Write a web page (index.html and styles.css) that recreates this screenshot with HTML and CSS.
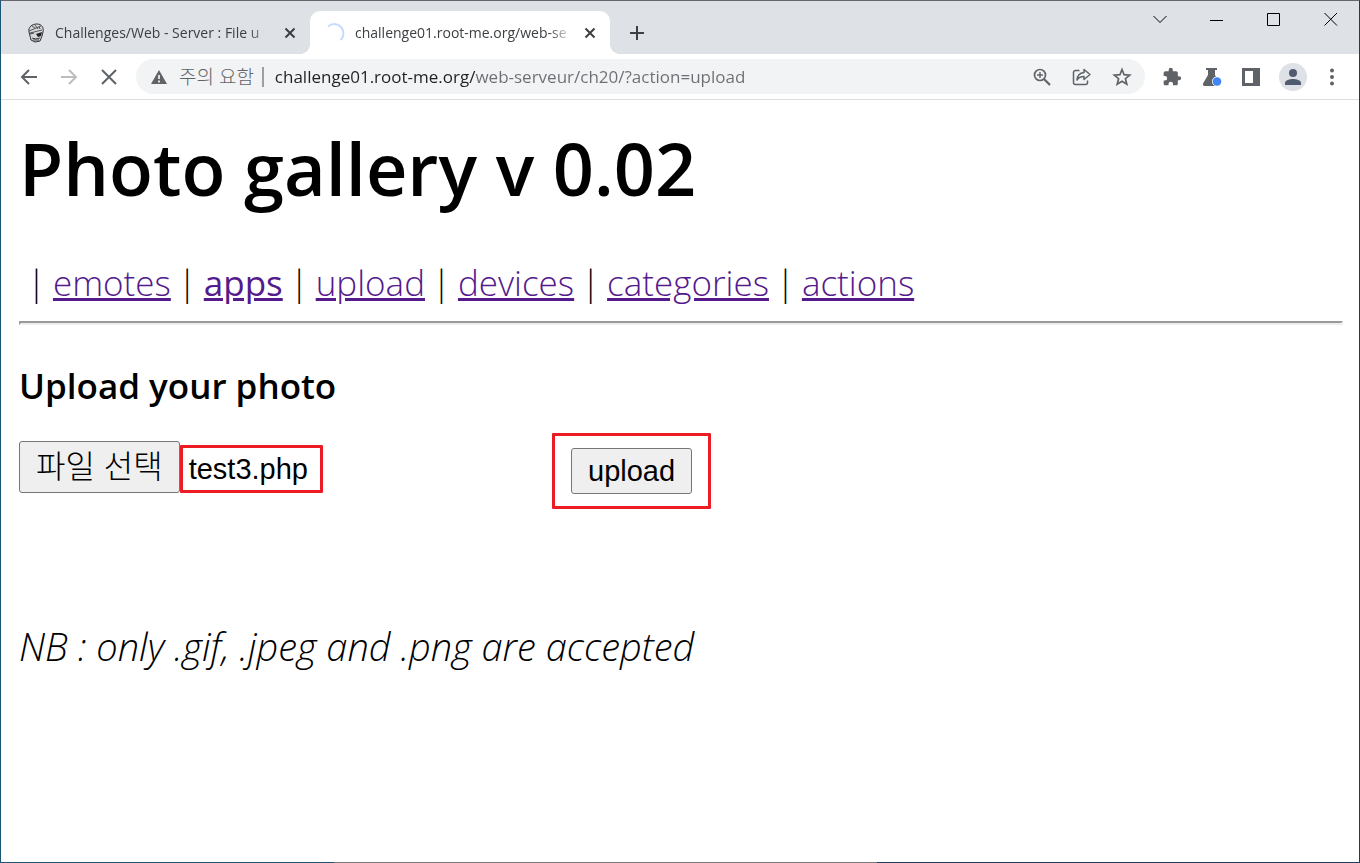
FILE: index.html
```
<!DOCTYPE html>
<html lang="ko">

<head>
    <meta charset="UTF-8">
    <meta name="viewport" content="width=device-width, initial-scale=1.0">
    <title>Photo gallery v 0.02</title>
    <link rel="stylesheet" href="styles.css">
</head>

<body>
    <div class="window">
        <header class="tab-strip">
            <div class="tab">
                <svg class="favicon" width="18" height="20" viewBox="0 0 18 20">
                    <path d="M2 9C1 4 5 1 10 1c5 0 7 4 6 8l-1 4-2 5-5 1-4-2z" fill="#d5d7da" stroke="#333" />
                    <path d="M2 8l12-5M3 10l12-3M5 3l3 2M8 2l3 4M12 3l1 3" stroke="#555" fill="none" />
                    <path d="M9 11l6-2-1 4-3 1z" fill="#222" />
                    <path d="M3 11l4-1M5 15l3 1 5-1M7 15v3M9 16v2M11 15v3" stroke="#444" fill="none" />
                </svg>
                <span class="tab-title">Challenges/Web - Server : File u</span>
                <button class="tab-close" aria-label="탭 닫기">
                    <svg width="12" height="12" viewBox="0 0 12 12"><path d="M1.5 1.5l9 9M10.5 1.5l-9 9" /></svg>
                </button>
            </div>
            <div class="tab active">
                <svg class="favicon" width="18" height="20" viewBox="0 0 18 20">
                    <path d="M1 3.5A8.5 8.5 0 0 1 13.5 17" fill="none" stroke="#c6dafc" stroke-width="2" />
                </svg>
                <span class="tab-title">challenge01.root-me.org/web-se</span>
                <button class="tab-close" aria-label="탭 닫기">
                    <svg width="12" height="12" viewBox="0 0 12 12"><path d="M1.5 1.5l9 9M10.5 1.5l-9 9" /></svg>
                </button>
            </div>
            <button class="new-tab" aria-label="새 탭">
                <svg width="16" height="16" viewBox="0 0 16 16"><path d="M8 1v14M1 8h14" /></svg>
            </button>
            <div class="window-controls">
                <button aria-label="탭 검색"><svg width="14" height="14" viewBox="0 0 14 14"><path d="M.5 4L7 10.500 13.500 4" /></svg></button>
                <button aria-label="최소화"><svg width="14" height="14" viewBox="0 0 14 14"><path d="M0 8.500h13" /></svg></button>
                <button aria-label="최대화"><svg width="14" height="14" viewBox="0 0 14 14"><path d="M.5 1.500h12v12H.5z" /></svg></button>
                <button aria-label="닫기"><svg width="14" height="14" viewBox="0 0 14 14"><path d="M.5 1l12.500 12.500M13 1L.5 13.500" /></svg></button>
            </div>
        </header>

        <div class="toolbar">
            <div class="history">
                <button aria-label="뒤로"><svg width="18" height="18" viewBox="0 0 18 18"><path d="M17 9H2M9 2L2 9l7 7" /></svg></button>
                <button aria-label="앞으로" disabled><svg width="18" height="18" viewBox="0 0 18 18"><path d="M1 9h15M9 2l7 7-7 7" /></svg></button>
                <button aria-label="중지"><svg width="18" height="18" viewBox="0 0 18 18"><path d="M2 2l14 14M16 2L2 16" /></svg></button>
            </div>
            <div class="address-bar">
                <svg width="16" height="14" viewBox="0 0 16 14">
                    <path d="M8 0l8 14H0z" fill="#5f6368" />
                    <path d="M8 5v4M8 10.500v2" stroke="#fff" stroke-width="1.600" />
                </svg>
                <span class="security">주의 요함</span>
                <input class="url" type="text" aria-label="주소창" value="challenge01.root-me.org/web-serveur/ch20/?action=upload">
                <button aria-label="확대">
                    <svg width="20" height="20" viewBox="0 0 20 20" fill="none" stroke="#5f6368">
                        <circle cx="8" cy="8" r="5.500" stroke-width="1.700" />
                        <path d="M12 12l6 6" stroke-width="2.200" />
                        <path d="M8 5v6M5 8h6" stroke-width="1.400" />
                    </svg>
                </button>
                <button aria-label="공유">
                    <svg width="20" height="20" viewBox="0 0 20 20" fill="none" stroke="#5f6368" stroke-width="1.500">
                        <path d="M7.500 3.500H3.500a2 2 0 0 0-2 2v10a2 2 0 0 0 2 2h10a2 2 0 0 0 2-2v-2" />
                        <path d="M12 2.500l6 5-6 5v-3c-3.500 0-5.500 1-7 3.500.3-4.500 2.500-7 7-7.500z" stroke-linejoin="round" />
                    </svg>
                </button>
                <button aria-label="북마크">
                    <svg width="20" height="20" viewBox="0 0 20 20" fill="none" stroke="#5f6368" stroke-width="1.700">
                        <path d="M10 2.500l2.100 5.200 5.600.4-4.300 3.600 1.400 5.500L10 14.200l-4.800 3 1.400-5.500-4.300-3.600 5.600-.4z" />
                    </svg>
                </button>
            </div>
            <div class="extensions">
                <button aria-label="확장 프로그램">
                    <svg width="22" height="20" viewBox="0 0 24 24">
                        <path d="M20.500 11H19V7c0-1.100-.9-2-2-2h-4V3.500a2.500 2.500 0 0 0-5 0V5H4c-1.100 0-2 .9-2 2v3.800h1.500a2.700 2.700 0 0 1 0 5.400H2V20c0 1.100.9 2 2 2h3.800v-1.500a2.700 2.700 0 0 1 5.400 0V22H17c1.100 0 2-.9 2-2v-4h1.500a2.500 2.500 0 0 0 0-5z" fill="#5f6368" />
                    </svg>
                </button>
                <button aria-label="실험실">
                    <svg width="22" height="20" viewBox="0 0 20 20">
                        <path d="M4 1h11v2h-2v5l5 8c.8 1.500 0 3-1.500 3h-14C1 19 .5 17.500 1.300 16L6 8V3H4z" fill="#5f6368" />
                        <circle cx="15" cy="14.500" r="5" fill="#fff" />
                        <circle cx="15" cy="14.500" r="4.300" fill="#4285f4" />
                    </svg>
                </button>
                <button aria-label="측면 패널">
                    <svg width="20" height="18" viewBox="0 0 18 18">
                        <path d="M0 0h18v18H0zM3 3v12h8V3z" fill="#5f6368" fill-rule="evenodd" />
                    </svg>
                </button>
                <button class="profile" aria-label="프로필">
                    <svg width="18" height="18" viewBox="0 0 18 18" fill="#525c70">
                        <circle cx="9" cy="5" r="4" />
                        <path d="M1 17v-2c0-3 5-4 8-4s8 1 8 4v2z" />
                    </svg>
                </button>
                <button aria-label="메뉴">
                    <svg width="14" height="18" viewBox="0 0 14 18" fill="#5f6368">
                        <circle cx="7" cy="2.500" r="2" /><circle cx="7" cy="9" r="2" /><circle cx="7" cy="15.500" r="2" />
                    </svg>
                </button>
            </div>
        </div>

        <main class="page">
            <h1>Photo gallery v 0.02</h1>
            <nav class="menu">
                <span>|</span>
                <a href="#emotes">emotes</a>
                <span>|</span>
                <a href="#apps"><b>apps</b></a>
                <span>|</span>
                <a href="#upload">upload</a>
                <span>|</span>
                <a href="#devices">devices</a>
                <span>|</span>
                <a href="#categories">categories</a>
                <span>|</span>
                <a href="#actions">actions</a>
            </nav>
            <hr>
            <h3>Upload your photo</h3>
            <form class="upload-form">
                <div class="file-picker">
                    <button type="button" class="file-button">파일 선택</button>
                    <span class="file-name">test3.php</span>
                </div>
                <div class="submit-box">
                    <button type="submit">upload</button>
                </div>
            </form>
            <p class="notice">NB : only .gif, .jpeg and .png are accepted</p>
        </main>
        <div class="window-bottom"></div>
    </div>
</body>

</html>
```
FILE: styles.css
```
* {
    box-sizing: border-box;
}

body {
    margin: 0;
    background-color: white;
    color: black;
    font-family: "Open Sans", "Noto Sans CJK KR", sans-serif;
}

button {
    margin: 0;
    padding: 0;
    border: none;
    background: none;
}

svg {
    display: block;
    flex-shrink: 0;
}

.window {
    display: flex;
    flex-direction: column;
    min-height: 100vh;
    border-top: 1px solid #66676b;
    border-left: 1px solid #1b5577;
    border-right: 1px solid #1f3b64;
}

/* tabs */
.tab-strip {
    display: flex;
    height: 53px;
    padding-left: 9px;
    background-color: #dee1e6;
}

.tab {
    position: relative;
    display: flex;
    align-items: center;
    width: 300px;
    height: 43px;
    margin-top: 10px;
    padding: 0 14px 0 17px;
    border-radius: 10px 10px 0 0;
}

.tab.active {
    background-color: white;
}

/* rounded feet of the open tab */
.tab.active::before,
.tab.active::after {
    content: "";
    position: absolute;
    bottom: 0;
    width: 10px;
    height: 10px;
}

.tab.active::before {
    left: -10px;
    background: radial-gradient(circle at 0 0, transparent 10px, white 10px);
}

.tab.active::after {
    right: -10px;
    background: radial-gradient(circle at 100% 0, transparent 10px, white 10px);
}

.tab-title {
    flex: 1;
    margin: 0 11px 0 10px;
    overflow: hidden;
    white-space: nowrap;
    font-size: 14px;
    line-height: 20px;
    color: #3c4043;
    -webkit-mask-image: linear-gradient(to left, transparent, black 24px);
    mask-image: linear-gradient(to left, transparent, black 24px);
}

.tab-close svg,
.new-tab svg {
    fill: none;
    stroke: #3c4043;
    stroke-width: 2;
}

.new-tab {
    width: 16px;
    margin: 10px 0 0 19px;
}

.window-controls {
    display: flex;
    align-items: flex-start;
    margin-left: auto;
}

.window-controls button {
    display: flex;
    justify-content: center;
    width: 57px;
    padding-top: 11px;
}

.window-controls svg {
    fill: none;
    stroke: black;
}

/* toolbar */
.toolbar {
    display: flex;
    align-items: center;
    height: 46px;
    padding: 0 20px 0 19px;
    border-bottom: 1px solid #dcdddf;
}

.history {
    display: flex;
    gap: 22px;
    margin-right: 18px;
}

.history svg {
    fill: none;
    stroke: #5f6368;
    stroke-width: 2;
}

.history button:disabled svg {
    stroke: #bbbdbf;
}

.address-bar {
    display: flex;
    flex: 1;
    align-items: center;
    height: 35px;
    padding: 0 13px 0 15px;
    border-radius: 18px;
    background-color: #f1f3f4;
}

.address-bar button {
    margin-left: 20px;
}

.security {
    margin: 0 11px 0 12px;
    padding-right: 8px;
    border-right: 2px solid #9aa0a6;
    font-size: 19px;
    font-weight: 300;
    line-height: 20px;
    color: #5f6368;
}

/* host is darker than the path */
.url {
    flex: 1;
    min-width: 0;
    padding: 0;
    border: none;
    outline: none;
    font-family: inherit;
    font-size: 17px;
    color: transparent;
    background: linear-gradient(to right, #202124 200px, #6b6f73 200px);
    -webkit-background-clip: text;
    background-clip: text;
}

.extensions {
    display: flex;
    align-items: center;
    gap: 18px;
    margin-left: 16px;
}

.profile {
    display: flex;
    align-items: center;
    justify-content: center;
    width: 28px;
    height: 28px;
    border-radius: 50%;
    background-color: #dee1e6;
}

/* page */
.page {
    flex: 1;
    padding: 20px 16px 18px 18px;
    font-size: 35px;
    line-height: 48px;
}

h1 {
    margin: 0 0 43px;
    font-size: 72px;
    font-weight: 600;
    line-height: 96px;
}

.menu {
    display: flex;
    gap: 7px;
    padding-left: 8px;
    font-weight: 300;
}

.menu a {
    color: #551a8b;
}

hr {
    height: 4px;
    margin: 14px 0 37px;
    border: 2px solid;
    border-color: #9a9a9a #eeeeee #eeeeee #9a9a9a;
}

h3 {
    margin: 0 0 23px;
    font-size: 35px;
    font-weight: 600;
}

.upload-form {
    display: flex;
    align-items: center;
    height: 76px;
}

.file-picker {
    display: flex;
    align-items: flex-end;
    width: 533px;
    padding-bottom: 8px;
}

.upload-form button {
    border: 1px solid #767676;
    border-radius: 3px;
    background-color: #efefef;
    font-family: "Liberation Sans", "Noto Sans CJK KR", sans-serif;
    font-size: 29px;
    line-height: 44px;
    padding: 0 16px;
}

.upload-form .file-button {
    font-size: 32px;
    font-weight: 300;
    line-height: 50px;
}

.file-name {
    padding: 0 12px 0 6px;
    border: 3px solid #ed1c24;
    border-radius: 1px;
    font-family: "Liberation Sans", sans-serif;
    font-size: 29px;
    line-height: 42px;
}

.submit-box {
    display: flex;
    padding: 12px 16px;
    border: 3px solid #ed1c24;
    border-radius: 1px;
}

.notice {
    margin: 113px 0 0;
    font-size: 38px;
    font-style: italic;
    font-weight: 300;
}

.window-bottom {
    height: 1px;
    background: linear-gradient(to right, #1b5577 333px, #77787a 333px, #77787a 876px, #1f3f66 876px);
}
```
